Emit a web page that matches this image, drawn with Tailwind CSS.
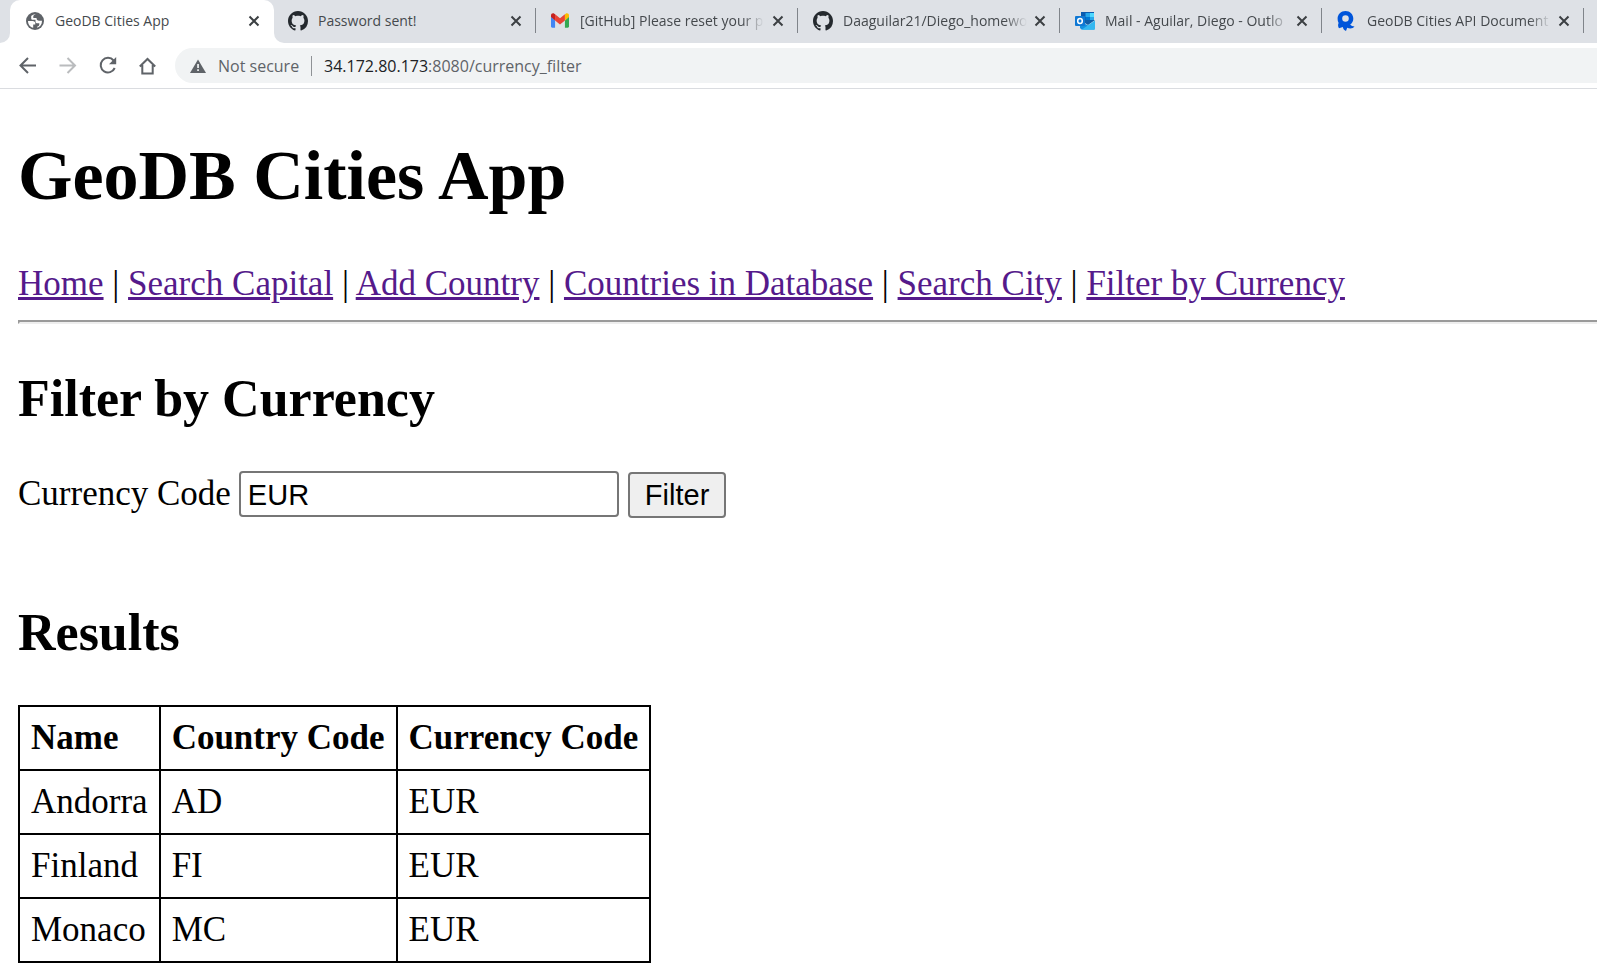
<!DOCTYPE html>
<html lang="en">
<head>
<meta charset="utf-8">
<meta name="viewport" content="width=device-width, initial-scale=1">
<title>GeoDB Cities App</title>
<script src="https://cdn.jsdelivr.net/npm/@tailwindcss/browser@4"></script>
</head>
<body class="min-h-screen overflow-x-hidden bg-white text-black">
<svg class="hidden" aria-hidden="true">
  <symbol id="close" viewBox="0 0 12 12"><path d="M1.5 1.5l9 9M10.5 1.5l-9 9" stroke="#3c4043" stroke-width="2" fill="none"/></symbol>
  <symbol id="github" viewBox="0 0 16 16"><path fill="#24292e" d="M8 0C3.58 0 0 3.58 0 8c0 3.54 2.29 6.53 5.47 7.59.4.07.55-.17.55-.38 0-.19-.01-.82-.01-1.49-2.01.37-2.53-.49-2.69-.94-.09-.23-.48-.94-.82-1.13-.28-.15-.68-.52-.01-.53.63-.01 1.08.58 1.23.82.72 1.21 1.87.87 2.33.66.07-.52.28-.87.51-1.07-1.78-.2-3.64-.89-3.64-3.95 0-.87.31-1.59.82-2.15-.08-.2-.36-1.02.08-2.12 0 0 .67-.21 2.2.82.64-.18 1.32-.27 2-.27s1.36.09 2 .27c1.53-1.04 2.2-.82 2.2-.82.44 1.1.16 1.92.08 2.12.51.56.82 1.27.82 2.15 0 3.07-1.87 3.75-3.65 3.95.29.25.54.73.54 1.48 0 1.07-.01 1.93-.01 2.2 0 .21.15.46.55.38A8.01 8.01 0 0016 8c0-4.42-3.58-8-8-8z"/></symbol>
</svg>

<header class="border-b border-[#dadce0] font-['Open_Sans',sans-serif]">
  <div class="flex h-[43px] overflow-hidden bg-[#dee1e6] pb-0.5 pl-2.5 text-sm text-[#45494d]" role="tablist">
    <div class="relative -mb-0.5 flex w-[264px] shrink-0 items-center rounded-t-[10px] bg-white pr-3.5 pb-0.5 pl-4" role="tab" aria-selected="true">
      <span class="absolute bottom-0 -left-2.5 size-2.5 bg-white"><span class="block size-2.5 rounded-br-[10px] bg-[#dee1e6]"></span></span>
      <span class="absolute -right-2.5 bottom-0 size-2.5 bg-white"><span class="block size-2.5 rounded-bl-[10px] bg-[#dee1e6]"></span></span>
      <svg class="mr-[11px] size-[18px] shrink-0" viewBox="0 0 18 18"><circle cx="9" cy="9" r="9" fill="#5f6368"/><path d="M2 9h4.500c1.800 0 2.800 1 2.800 2.200v1.200H7.200v3.400C4.200 15.200 2 12.500 2 9zM10.500 2.200C8.500 2 7.300 3.200 7.300 4.500v1.600h3.200c0 1.800 1 2.700 2.600 2.700H16c.1 3.400-1.800 6-4.700 6.900v-1.200c1.500-.3 2-1 2-2.200v-1.100h-1.800c-1.300 0-2-.8-2-1.800V7.800H6.700c-1 0-1.500-.5-1.500-1.400V4.100C6.700 2.500 8.600 1.900 10.500 2.200z" fill="#fff"/></svg>
      <span class="w-[184px] overflow-hidden whitespace-nowrap">GeoDB Cities App</span>
      <button class="ml-auto" aria-label="Close tab"><svg class="size-3"><use href="#close"/></svg></button>
    </div>
    <div class="flex w-[262px] shrink-0 items-center pr-3 pl-3.5" role="tab">
      <svg class="mr-[10px] size-5 shrink-0"><use href="#github"/></svg>
      <span class="w-[184px] overflow-hidden whitespace-nowrap">Password sent!</span>
      <button class="ml-auto" aria-label="Close tab"><svg class="size-3"><use href="#close"/></svg></button>
      <span class="ml-[13px] -mr-3 h-[25px] w-px shrink-0 bg-[#80848a]"></span>
    </div>
    <div class="flex w-[262px] shrink-0 items-center pr-3 pl-[15px]" role="tab">
      <svg class="mr-[11px] h-[15px] w-[18px] shrink-0" viewBox="0 0 19 15" preserveAspectRatio="none"><path fill="#4285f4" d="M0 3.500V13.600c0 .7.600 1.200 1.300 1.200h3V7.500z"/><path fill="#34a853" d="M19 3.500V13.600c0 .7-.600 1.200-1.300 1.200h-3V7.500z"/><path fill="#ea4335" d="M4.300 1.300L9.500 5.200l5.200-3.900v6.200L9.500 11.400 4.300 7.500z"/><path fill="#c5221f" d="M0 2.300v1.700l4.300 3.500V1.300L3.500.7C2 -.4 0 .5 0 2.300z"/><path fill="#fbbc04" d="M19 2.300v1.700l-4.300 3.500V1.300l.8-.6C17-.4 19 .5 19 2.300z"/></svg>
      <span class="w-[184px] overflow-hidden mask-r-from-88% whitespace-nowrap">[GitHub] Please reset your p</span>
      <button class="ml-auto" aria-label="Close tab"><svg class="size-3"><use href="#close"/></svg></button>
      <span class="ml-[13px] -mr-3 h-[25px] w-px shrink-0 bg-[#80848a]"></span>
    </div>
    <div class="flex w-[262px] shrink-0 items-center pr-3 pl-[15px]" role="tab">
      <svg class="mr-[10px] size-5 shrink-0"><use href="#github"/></svg>
      <span class="w-[184px] overflow-hidden mask-r-from-88% whitespace-nowrap">Daaguilar21/Diego_homewo</span>
      <button class="ml-auto" aria-label="Close tab"><svg class="size-3"><use href="#close"/></svg></button>
      <span class="ml-[13px] -mr-3 h-[25px] w-px shrink-0 bg-[#80848a]"></span>
    </div>
    <div class="flex w-[262px] shrink-0 items-center pr-3 pl-[15px]" role="tab">
      <svg class="mr-[10px] size-5 shrink-0" viewBox="0 0 20 20"><path fill="#0a5bb0" d="M6 1h13v9H6z"/><path fill="#28a8ea" d="M10.500 2H15v4h-4.500z"/><path fill="#50d9ff" d="M15 2h4v4h-4z"/><path fill="#0078d4" d="M10.500 6H15v4h-4.500z"/><path fill="#28a8ea" d="M15 6h4v4h-4z"/><path fill="#0f5ea8" d="M5 9h15l-7 5z"/><path fill="#1490df" d="M5 10l15 8.500H6.500L5 17z"/><path fill="#35b8f1" d="M20 9.500V18l-1 .8H6.500z"/><rect y="5" width="10" height="10" rx="1" fill="#0f78d4"/><ellipse cx="5" cy="10" rx="2.300" ry="2.500" fill="none" stroke="#fff" stroke-width="1.500"/></svg>
      <span class="w-[184px] overflow-hidden mask-r-from-88% whitespace-nowrap">Mail - Aguilar, Diego - Outlo</span>
      <button class="ml-auto" aria-label="Close tab"><svg class="size-3"><use href="#close"/></svg></button>
      <span class="ml-[13px] -mr-3 h-[25px] w-px shrink-0 bg-[#80848a]"></span>
    </div>
    <div class="flex w-[262px] shrink-0 items-center pr-3 pl-[15px]" role="tab">
      <svg class="mr-[10px] size-5 shrink-0" viewBox="0 0 20 20"><path fill="#0055da" fill-rule="evenodd" d="M8.500 0C13 0 16.300 3.300 16.300 7.700c0 2.500-1.200 4.500-3.100 5.800 1 1.200 2.400 1.900 4.300 2-1.300 2-4.500 2.500-7.300 1.300L9 20c-1.800-.7-2.900-2-3.200-4L2 17.200C.9 15.500.8 13.700 1.600 12 .9 10.800.6 9.300.6 7.700.6 3.300 4 0 8.500 0zM8.500 4.200a3.300 3.300 0 1 0 0 6.600 3.300 3.300 0 0 0 0-6.600z"/></svg>
      <span class="w-[184px] overflow-hidden mask-r-from-88% whitespace-nowrap">GeoDB Cities API Document</span>
      <button class="ml-auto" aria-label="Close tab"><svg class="size-3"><use href="#close"/></svg></button>
      <span class="ml-[13px] -mr-3 h-[25px] w-px shrink-0 bg-[#80848a]"></span>
    </div>
  </div>

  <div class="flex items-center py-[5px] pl-[18px]">
    <div class="flex shrink-0 items-center gap-5">
      <button aria-label="Back"><svg class="size-5" viewBox="0 0 20 20" fill="none" stroke="#5f6368" stroke-width="2"><path d="M18 9.500H3.500M10 2L2.500 9.500 10 17"/></svg></button>
      <button aria-label="Forward"><svg class="size-5" viewBox="0 0 20 20" fill="none" stroke="#babcbe" stroke-width="2"><path d="M1.500 9.500H16M9.500 2L17 9.500 9.500 17"/></svg></button>
      <button aria-label="Reload"><svg class="size-5" viewBox="0 0 20 20" fill="none" stroke="#5f6368" stroke-width="2"><path d="M15.600 4.500A7.300 7.300 0 1 0 16.700 12"/><path d="M18.200 1V8.300H11z" fill="#5f6368" stroke="none"/></svg></button>
      <button aria-label="Home"><svg class="size-5" viewBox="0 0 20 20" fill="none" stroke="#5f6368" stroke-width="2"><path d="M1.800 10.500L9.500 3l7.700 7.500M4.300 9v8.500h10.400V9"/></svg></button>
    </div>
    <div class="ml-[17px] flex h-[35px] flex-1 items-center rounded-l-full bg-[#f1f3f4] pl-[15px] text-base text-[#5f6368]">
      <svg class="mr-3 size-4 shrink-0" viewBox="0 0 16 16"><path d="M8 1.500L16 15H0z" fill="#5f6368"/><path d="M7.200 6h1.700v4H7.200zM7.200 11.300h1.700V13H7.200z" fill="#f1f3f4"/></svg>
      <span class="w-[84px] whitespace-nowrap">Not secure</span>
      <span class="ml-[9px] h-5 w-px bg-[#8f9296]"></span>
      <span class="ml-3 whitespace-nowrap"><span class="text-[#202124]">34.172.80.173</span>:8080/currency_filter</span>
    </div>
  </div>
</header>

<main class="pt-[47px] pl-[18px] font-['Liberation_Serif',serif] text-[35px] leading-10">
  <h1 class="text-[70px] leading-[80px] font-bold">GeoDB Cities App</h1>
  <nav class="mt-12 text-black">
    <a href="#" class="text-[#551a8b] underline">Home</a> |
    <a href="#" class="text-[#551a8b] underline">Search Capital</a> |
    <a href="#" class="text-[#551a8b] underline">Add Country</a> |
    <a href="#" class="text-[#551a8b] underline">Countries in Database</a> |
    <a href="#" class="text-[#551a8b] underline">Search City</a> |
    <a href="#" class="text-[#551a8b] underline">Filter by Currency</a>
  </nav>
  <hr class="mt-4 h-1 border-t-2 border-b-2 border-l-2 border-t-[#9a9a9a] border-b-[#eeeeee] border-l-[#9a9a9a]">

  <h2 class="mt-[45px] text-[52px] leading-[60px] font-bold">Filter by Currency</h2>
  <form class="mt-[42px] flex items-baseline gap-2" onsubmit="return false">
    <label for="code">Currency Code</label>
    <input id="code" type="text" value="EUR" class="h-[46px] w-[380px] rounded-[4px] border-2 border-[#767676] bg-white px-[7px] pt-0.5 font-['Liberation_Sans',sans-serif] text-[29px] leading-8">
    <button type="submit" class="ml-px h-[46px] rounded-[4px] border-2 border-[#767676] bg-[#efefef] px-[15px] font-['Liberation_Sans',sans-serif] text-[29px] leading-8">Filter</button>
  </form>

  <h2 class="mt-[85px] text-[52px] leading-[60px] font-bold">Results</h2>
  <table class="mt-[42px] border-collapse border-2 border-black text-left">
    <thead>
      <tr><th class="border-2 border-black p-[11px]">Name</th><th class="border-2 border-black p-[11px]">Country Code</th><th class="border-2 border-black p-[11px]">Currency Code</th></tr>
    </thead>
    <tbody>
      <tr><td class="border-2 border-black p-[11px]">Andorra</td><td class="border-2 border-black p-[11px]">AD</td><td class="border-2 border-black p-[11px]">EUR</td></tr>
      <tr><td class="border-2 border-black p-[11px]">Finland</td><td class="border-2 border-black p-[11px]">FI</td><td class="border-2 border-black p-[11px]">EUR</td></tr>
      <tr><td class="border-2 border-black p-[11px]">Monaco</td><td class="border-2 border-black p-[11px]">MC</td><td class="border-2 border-black p-[11px]">EUR</td></tr>
    </tbody>
  </table>
</main>
</body>
</html>
